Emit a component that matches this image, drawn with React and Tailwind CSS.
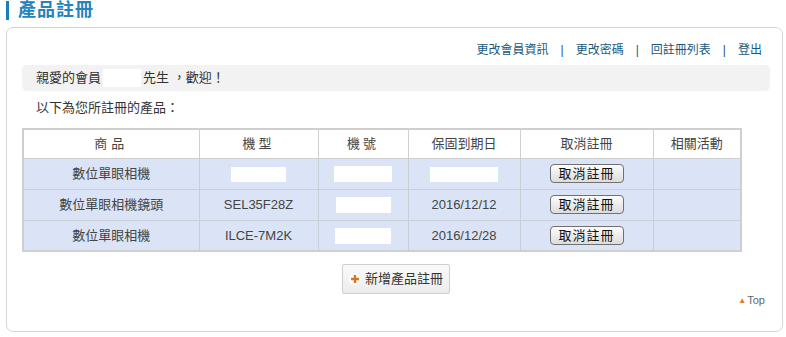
import React from 'react';

const rows = [
  { name: '數位單眼相機', model: null, serial: 58, date: null },
  { name: '數位單眼相機鏡頭', model: 'SEL35F28Z', serial: 55, date: '2016/12/12' },
  { name: '數位單眼相機', model: 'ILCE-7M2K', serial: 56, date: '2016/12/28' },
];

const cjk = { fontFamily: '"Liberation Sans", "Noto Sans CJK TC", sans-serif' };

function CancelButton() {
  return (
    <button className="h-[19px] w-[74px] rounded-[4px] border border-[#707070] bg-gradient-to-b from-[#fdfdfd] to-[#dcdcdc] text-[13px] leading-none text-[#111] tracking-[1px]">
      取消註冊
    </button>
  );
}

export default function App() {
  return (
    <div className="w-[786px] h-[337px] bg-white overflow-hidden text-[#333]" style={cjk}>
      {/* 標題 */}
      <div className="flex items-center h-[20px] pl-[6px]">
        <div className="w-[3px] h-[19px] bg-[#1a7db5]" />
        <h1 className="ml-[9px] text-[18px] leading-none font-bold text-[#2583bd] tracking-[1px]">產品註冊</h1>
      </div>

      {/* 主卡片 */}
      <div className="mt-[7px] ml-[6px] w-[777px] h-[305px] rounded-[7px] border border-[#d6d6d6] pt-[14px] pl-[15px] pr-[12px]">
        <div className="flex justify-end items-center gap-[12px] pr-[8px] text-[12px] text-[#1b5a7d] leading-[16px]">
          <span>更改會員資訊</span>
          <span>|</span>
          <span>更改密碼</span>
          <span>|</span>
          <span>回註冊列表</span>
          <span>|</span>
          <span>登出</span>
        </div>

        <div className="mt-[7px] h-[26px] rounded-[5px] bg-[#f2f2f2] flex items-center pl-[14px] text-[13px] text-[#333]">
          <span>親愛的會員</span>
          <span className="inline-block w-[38px] h-[18px] bg-white mx-[2px]" />
          <span>先生 ，歡迎！</span>
        </div>

        <div className="mt-[9px] pl-[14px] text-[13px] leading-[16px]">以下為您所註冊的產品：</div>

        <table className="mt-[12px] w-[720px] border-collapse border-2 border-[#cfcfcf] text-[13px] text-center text-[#444]">
          <thead>
            <tr className="h-[29px] bg-white">
              <th className="w-[176px] border border-[#cfcfcf] font-normal tracking-[4px]">商品</th>
              <th className="w-[119px] border border-[#cfcfcf] font-normal tracking-[3px]">機型</th>
              <th className="w-[90px] border border-[#cfcfcf] font-normal tracking-[3px]">機號</th>
              <th className="w-[112px] border border-[#cfcfcf] font-normal">保固到期日</th>
              <th className="w-[133px] border border-[#cfcfcf] font-normal">取消註冊</th>
              <th className="border border-[#cfcfcf] font-normal">相關活動</th>
            </tr>
          </thead>
          <tbody>
            {rows.map((r, i) => (
              <tr key={i} className="h-[31px] bg-[#dae4f6]">
                <td className="border border-[#c9cfd9]">{r.name}</td>
                <td className="border border-[#c9cfd9]">
                  {r.model ? r.model : <span className="inline-block align-middle w-[55px] h-[15px] bg-white" />}
                </td>
                <td className="border border-[#c9cfd9]">
                  <span className="inline-block align-middle h-[16px] bg-white" style={{ width: r.serial }} />
                </td>
                <td className="border border-[#c9cfd9]">
                  {r.date ? r.date : <span className="inline-block align-middle w-[68px] h-[15px] bg-white" />}
                </td>
                <td className="border border-[#c9cfd9]">
                  <CancelButton />
                </td>
                <td className="border border-[#c9cfd9]" />
              </tr>
            ))}
          </tbody>
        </table>

        <div className="flex justify-center mt-[12px]">
          <button className="h-[30px] w-[108px] flex items-center justify-center gap-[4px] rounded-[2px] border border-[#cfcfcf] bg-gradient-to-b from-[#fafafa] to-[#ececec] text-[13px] text-[#333]">
            <span className="flex items-center justify-center w-[12px] h-[12px] rounded-full bg-white">
              <svg width="10" height="10" viewBox="0 0 10 10">
                <path d="M5 1v8M1 5h8" stroke="#d9741f" strokeWidth="2.4" />
              </svg>
            </span>
            <span>新增產品註冊</span>
          </button>
        </div>

        <div className="flex justify-end items-center mt-[1px] pr-[5px] text-[11px] leading-[11px] text-[#666]">
          <span className="text-[#e07b22] text-[8px] mr-[1px]">▲</span>
          <span>Top</span>
        </div>
      </div>
    </div>
  );
}
